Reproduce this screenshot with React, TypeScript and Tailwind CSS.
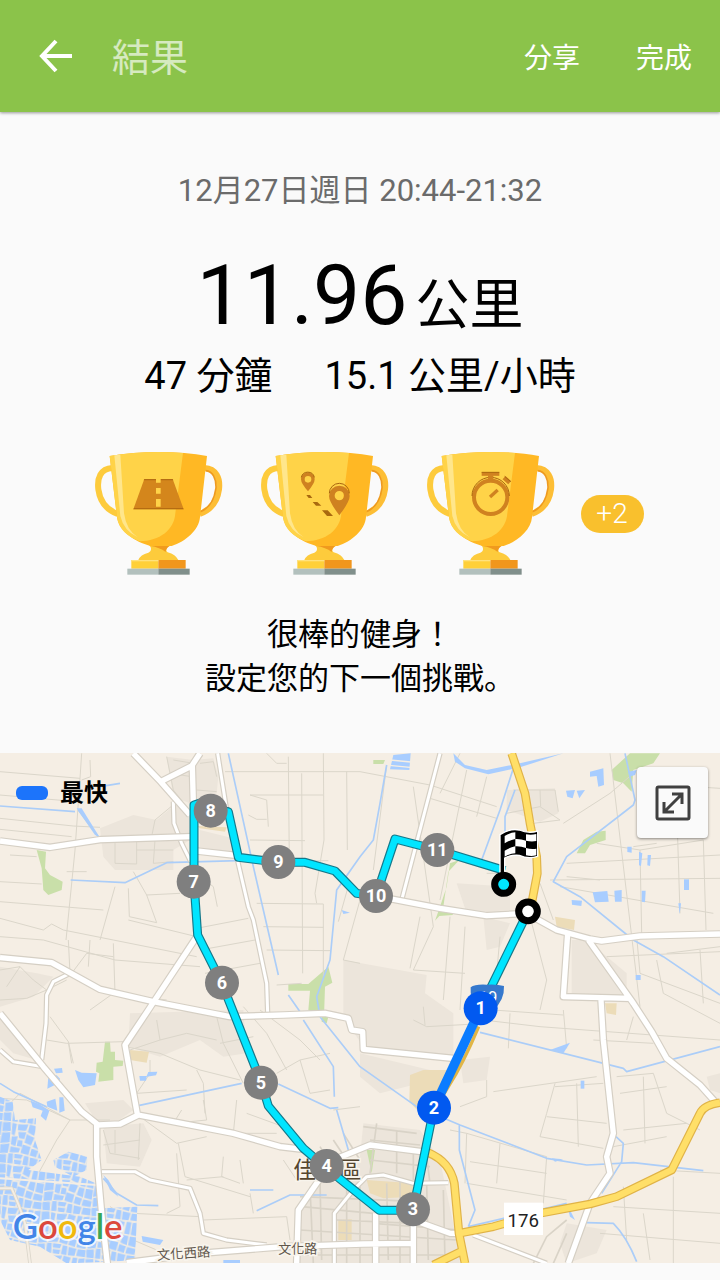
import type { ReactNode } from "react"

const minorRoads = [
  "M0 95 L240 115 L245 40 M240 115 L225 330 L198 600 M270 60 L272 110 L245 120",
  "M0 235 L220 258 L300 262 M0 165 L230 185 M0 268 L215 290 M0 425 L125 432",
  "M30 345 L110 350 M200 395 L260 395 M0 485 L310 510 M0 535 L130 570 L155 552 L190 570 L340 600 L590 650",
  "M0 590 L130 600 L345 660 L600 680 M205 600 L210 700 M270 600 L265 680 M340 610 L345 760 M345 440 L300 600",
  "M385 445 L388 530 L470 548 L440 465 L400 395 M385 540 L590 590 M440 465 L540 460 M590 565 L745 535 M600 630 L765 600 M615 700 L780 670",
  "M600 410 L640 440 L652 500 M345 290 L345 370 L410 372 L410 300 M465 300 L460 370 L520 365 M410 330 L520 330",
  "M455 290 L465 240 L525 190 M500 50 L520 150 L560 200 M520 60 L580 70 M510 100 L575 110 M590 150 L650 155 M600 70 L640 65 L650 110",
  "M675 95 L1080 95 M865 50 L868 370 M905 100 L908 700 M970 40 L972 300 L945 460 L950 490 M750 165 L970 165 M750 165 L800 180 L805 260",
  "M745 225 L770 238 L800 238 M750 300 L915 302 M1040 95 L1042 330 M770 365 L985 362 M770 490 L970 492 L970 720 M790 560 L970 562",
  "M800 630 L990 632 M830 735 L905 730 M1050 420 L1015 545 M1080 480 L1030 660 L1080 670 M800 40 L830 70 L860 70",
  "M1160 75 L1120 390 M1080 95 L1290 135 L1490 200 M1290 175 L1490 235 M1320 160 L1380 40 M1400 90 L1320 480 M1460 110 L1430 230",
  "M1240 140 L1300 560 L1240 690 L1395 700 M1260 530 L1230 685 M1350 530 L1330 780 M1395 560 L1380 810 M1460 400 L1520 400",
  "M1520 220 L1620 200 L1680 240 L1600 250 M1540 150 L1665 150 L1675 215 M1620 150 L1622 200 M1690 250 L1830 160 L1900 100",
  "M1830 40 L1920 800 M1800 420 L1700 410 M1700 370 L2160 345 M1650 420 L2160 415 M1680 440 L2140 520 M1790 310 L1920 330 L2110 300",
  "M2110 300 L2118 570 M2030 200 L2040 520 M1920 330 L1925 580 M1620 430 L1660 540 M1900 320 L1970 310 M2080 140 L2160 145",
  "M2000 640 L2160 620 M1910 590 L1920 700 L2160 790 M2100 630 L2110 790 M1970 660 L1990 760 L2160 850 M1820 650 L2160 635",
  "M1590 530 L1640 720 L1620 810 M1500 590 L1480 810 L1690 825 M1530 820 L1525 925 M1450 840 L1620 860 L2160 900 M1690 810 L1700 925",
  "M1480 1055 L1790 1010 M1665 1030 L1640 1120 L1620 1190 L1810 1225 M1665 1040 L1810 1030 M1730 1030 L1735 1220 M1640 1130 L1820 1150",
  "M1850 1010 L1960 1000 L2000 1120 L2100 1170 M1860 1060 L2000 1040 M1870 1170 L2060 1150 M1930 1010 L1935 1210 M1840 1220 L2000 1190",
  "M1350 1170 L1400 1180 L1640 1250 L1630 1390 M1400 1180 L1395 1330 M1500 1210 L1490 1330 M1400 1330 L1700 1380 M1410 1265 L1640 1300",
  "M1840 1400 L2160 1420 M1870 1340 L1880 1500 M2020 1310 L2020 1570 M1980 1290 L2160 1300 M1800 1480 L2160 1510 M1930 1420 L1950 1560",
  "M1380 1100 L1460 1070 L1460 1020 M1240 840 L1280 860 L1460 850 M1270 800 L1275 855 M1780 900 L1960 910 M1900 830 L1880 900",
  "M0 690 L60 680 L100 720 L140 750 L200 720 M60 680 L20 740 M0 780 L80 775 L140 750 M215 700 L260 640 L340 650 M270 810 L340 760 L500 780",
  "M140 900 L200 910 L370 905 M205 905 L215 970 M220 970 L205 905 L150 830 M375 920 L480 940 L600 990 L720 1020 M590 990 L610 1030 L615 1120",
  "M450 960 L450 1000 L410 1060 L560 1050 M610 1080 L620 1140 L520 1150 L545 1110 M710 1080 L700 1180 L830 1180 M740 1120 L850 1160",
  "M420 1130 L530 1210 L620 1190 M535 1210 L555 1310 L750 1370 M530 1240 L540 1400 L500 1420 M670 1250 L665 1310 L720 1330 M560 1320 L670 1310",
  "M400 1420 L600 1430 M610 1440 L860 1430 L870 1500 M750 1360 L760 1420 M850 1260 L890 1320 M720 1260 L730 1330",
  "M650 830 L670 910 L730 1030 M730 800 L800 880 L860 990 M780 810 L900 900 L960 960 M660 910 L760 890 M830 1000 L900 960 L990 940",
  "M470 840 L480 900 L390 930 M480 900 L560 880 L650 900 M900 960 L930 1060 L990 1050 M1000 1110 L1080 1100",
  "M310 1170 L330 1240 L420 1255 M345 1170 L345 1240 M420 1150 L415 1260 M310 1215 L420 1200 M0 1075 L80 1080 L210 1140 L330 1140",
  "M210 1140 L170 1200 L110 1310 M30 1090 L60 1060 L210 1140 M380 1430 L400 1500 L470 1530 M330 1400 L400 1440",
]

const townRoads = [
  "M900 1370 L1260 1385 M905 1400 L1120 1420 M1120 1450 L1380 1470 M1010 1440 L1240 1450 M900 1470 L1370 1500 M900 1545 L1380 1545",
  "M930 1340 L940 1570 M960 1320 L965 1560 M1040 1300 L1040 1570 M1080 1340 L1080 1570 M1160 1330 L1165 1560 M1200 1320 L1200 1570 M1280 1330 L1285 1560 M1330 1350 L1335 1560",
  "M1090 1160 L1250 1180 M1130 1150 L1110 1300 M1110 1200 L1260 1215 M1110 1260 L1290 1280 M1190 1170 L1190 1300 M1240 1240 L1240 1320 M1280 1250 L1290 1330",
  "M960 1220 L1010 1300 M1000 1200 L1060 1290 M1030 1180 L1080 1260 M1600 1570 L1640 1490 L1700 1440 M1660 1570 L1700 1480",
]

const whiteRoads = [
  "M400 40 L482 125 L570 225",
  "M482 125 L575 78 L600 40",
  "M577 78 L580 190",
  "M0 303 L150 322 L300 299 L575 290",
  "M590 333 L715 347",
  "M590 590 L445 810 L375 915 L412 1123",
  "M0 653 L155 668 L300 748 L460 785 L690 830 L850 825 L975 820 L1045 835 L1055 870 L1088 875 L1090 928 L1360 955",
  "M0 820 L130 980 L245 1115 L295 1155 L360 1152 L415 1125 L700 1180 L840 1220 L910 1228",
  "M290 1155 L290 1250 L305 1420 L322 1570",
  "M380 1568 L600 1540 L850 1520 L1090 1512 L1240 1510",
  "M890 1570 L895 1410 L950 1330 L1000 1260 L1110 1215 L1265 1235",
  "M1128 468 L1320 505 L1460 527 L1580 520 L1670 570 L1770 597 L1805 603 L1920 588 L2160 582",
  "M1703 580 L1690 770 L1890 775",
  "M1765 600 L1900 790 L1955 875 L2000 955 L2100 1035 L2145 1085",
  "M1803 780 L1810 900 L1825 1040 L1840 1180 L1820 1250 L1830 1300 L1770 1390 L1705 1570",
  "M1240 1440 L1350 1480 L1380 1480",
  "M1127 1420 L1127 1570 M1240 1440 L1240 1570",
]

const narrowRoads = [
  "M653 40 L680 210 L710 350 L745 500 L760 540 L800 730 L803 820",
  "M520 185 L522 250 L545 310 L572 365",
  "M210 700 L160 725 L140 765 L138 850 L125 960",
  "M0 930 L40 965 L130 980",
  "M305 1295 L405 1295 L450 1320 L570 1345 L600 1420 L610 1480 L680 1500 L800 1515",
  "M1003 1570 L1003 1420 L1060 1350 L1100 1310 L1150 1305 L1240 1330 L1345 1328",
  "M1320 40 L1205 480",
  "M1420 1485 L1640 1570",
]

const yellowRoads = [
  "M1535 40 L1575 160 L1590 250 L1610 350 L1612 400 L1595 490 L1585 520",
  "M1285 1238 Q1350 1265 1363 1330 L1377 1480 L1395 1570",
  "M1300 1575 L1382 1535",
  "M1377 1480 L1480 1460 L1620 1420 L1770 1392 L1850 1370 L2015 1290 L2100 1120 Q2112 1095 2160 1088",
]

const streams = [
  "M0 198 L225 215 M235 210 L295 290 M212 420 L375 428 L500 368 L715 362 M300 140 L360 130",
  "M685 40 L760 380 L835 705 M865 765 L900 815 M1080 350 L1010 450 L990 660 L950 770 L960 830",
  "M1160 75 L1140 190 L1120 300 L1080 350 M1540 85 L1500 210 L1445 360 M1545 150 L1515 230 L1515 290",
  "M1875 40 L1905 180 L1900 195 L1700 350 L1660 425 L1740 470 L1900 600 L1990 650 L2160 765",
  "M1440 877 L1870 985 L1880 995 L2160 920 M1080 980 L1250 1100 L1380 1155 L1640 1255 L1760 1275 L1900 1268 L2110 1292",
  "M1378 1155 L1378 1230 L1425 1410 L1405 1460 M1405 1460 L1700 1390 M1848 1190 L1870 1210 L1865 1265 L1805 1360",
  "M1760 1448 L1840 1450 Q1880 1490 1910 1565 M415 1097 L725 1030 M835 1032 L990 1105 L1015 1103",
  "M910 840 L1000 980 L1003 1070 M1010 1110 L1045 1230 M960 830 L1080 980 M770 1412 L870 1365 L980 1365 M750 1350 L820 1350",
  "M0 1030 L40 1055 L140 1100 M310 1315 L350 1360 L410 1395 L475 1397",
]

// outlines of the fish pond areas, filled with the ponds pattern
const pondAreas = [
  "0,1070 38,1085 45,1140 108,1135 105,1200 125,1260 85,1290 240,1310 288,1330 298,1405 412,1400 405,1560 330,1565 200,1570 120,1520 30,1500 0,1440",
  "160,1260 205,1235 262,1250 260,1290 220,1310 165,1280",
]

const water = [
  "92,1082 118,1092 148,1112 138,1142 122,1128 128,1112 98,1102",
  "140,1085 166,1076 172,1112 142,1100",
  "178,1072 190,1072 194,1112 178,1118",
  "162,986 186,984 188,998 168,1000",
  "145,1010 170,1006 180,1016 175,1030 142,1046",
  "225,990 245,998 290,1000 285,1035 250,1042 235,1020",
  "418,1008 440,1008 445,996 472,995 468,1006 440,1010 438,1022 420,1022",
  "230,205 245,205 298,290 285,285",
  "310,1305 325,1320 355,1370 330,1350",
  "425,1488 490,1500 480,1515 428,1505",
  "670,1560 720,1560 720,1570 670,1570",
  "1180,45 1232,40 1228,90 1170,88",
  "1360,40 1395,75 1460,90 1550,72 1690,40 1560,82 1465,103 1395,85 1365,65",
  "1770,95 1810,85 1812,135 1795,140 1790,108 1770,110",
  "1698,152 1725,150 1718,175 1702,170",
  "1730,152 1755,150 1738,175",
  "1885,95 1910,90 1905,105 1888,110",
  "1778,457 1822,453 1826,485 1785,487",
  "1843,452 1865,450 1865,485 1845,485",
  "1925,452 1937,452 1935,487 1925,485",
  "2052,418 2067,418 2067,450 2052,450",
  "2035,490 2043,490 2039,522",
  "1715,480 1746,482 1744,498 1716,494",
  "1882,320 1895,320 1895,338 1882,336",
  "1917,335 1927,340 1923,378 1917,376",
  "1943,345 1953,345 1950,378 1942,376",
  "1907,705 1922,705 1922,720 1907,720",
  "1650,930 1710,908 1690,940",
  "1742,1022 1753,1022 1753,1046 1742,1046",
  "1655,1255 1690,1258 1665,1265",
  "1700,1390 1725,1440 1710,1430",
  "1025,510 1050,518 1030,522",
]

const parks = [
  "110,330 138,335 135,385 150,405 188,425 185,450 145,465 130,450 125,385",
  "865,732 925,732 985,680 997,728 975,740 972,830 925,810 930,752 865,752",
  "315,905 330,905 332,935 345,935 345,960 370,962 368,978 340,980 340,1020 295,1025 298,1000 288,995 290,968 308,965",
  "1835,90 1890,40 1980,40 1960,70 1900,90 1895,155 1870,130 1840,120",
  "1730,340 1750,300 1790,275 1817,272 1817,300 1770,315 1755,340",
  "1350,370 1378,360 1345,395 1330,500 1360,515 1358,525 1318,528 1305,542 1320,500 1340,440",
  "1100,1230 1125,1230 1115,1300",
  "1120,60 1155,60 1150,72 1120,72",
  "965,830 985,830 980,850 965,845",
]

const builtUp = [
  "300,265 400,225 470,240 530,190 570,230 570,300 520,330 520,390 345,390 310,350",
  "500,50 580,60 640,55 655,110 650,160 570,190 520,170",
  "600,270 720,300 710,345 600,325",
  "390,820 730,810 740,940 670,950 600,900 480,950 385,920",
  "310,1160 430,1150 455,1200 420,1280 320,1270",
  "255,1090 370,1080 400,1110 350,1145 290,1145",
  "1030,660 1280,705 1275,760 1360,820 1360,950 1090,920 1030,830",
  "1080,940 1290,990 1260,1030 1140,1060 1080,1010",
  "1090,1150 1260,1170 1320,1260 1370,1500 1380,1570 900,1570 900,1400 960,1300 1080,1250",
  "1520,150 1665,145 1675,220 1620,245 1520,210",
  "1370,430 1530,440 1530,510 1400,520",
  "1450,530 1530,550 1500,620 1460,630",
  "1715,600 1760,600 1880,700 1880,770 1715,760",
  "1680,1510 1700,1450 1820,1470 1790,1540 1700,1570",
  "0,680 110,700 160,710 100,770 0,800",
  "1380,960 1470,950 1460,1020 1390,1030",
  "2120,1010 2160,1000 2160,1060 2130,1050",
  "0,830 60,880 110,960 40,940 0,900",
]

const sandPatches = [
  "1230,1005 1270,990 1350,990 1330,1070 1280,1140 1228,1085",
  "1100,1320 1240,1330 1240,1370 1150,1375 1110,1360",
  "390,930 447,935 440,968 390,960",
  "1665,530 1725,540 1722,570 1670,560",
  "1015,1440 1055,1438 1055,1500 1015,1500",
  "1815,790 1850,790 1848,825 1820,820",
  "590,258 680,262 675,275 600,265",
]

const routeStart = "M1584 515 L1442 805"
const routeEnd =
  "M1302 1103 L1239 1411 L1138 1411 L980 1285 L910 1225 L805 1098 L784 1028 L665 728 L593 585 L585 470 L582 425 L582 195 L605 188 L632 205 L685 215 L715 352 L835 367 L915 367 L1005 393 L1070 460 L1128 468 L1185 297 L1312 330 L1515 392"
const fastest = "M1442 805 L1302 1103"

const kilometres = [
  { n: 11, x: 1312, y: 330 },
  { n: 10, x: 1128, y: 468 },
  { n: 9, x: 835, y: 366 },
  { n: 8, x: 632, y: 212 },
  { n: 7, x: 581, y: 425 },
  { n: 6, x: 666, y: 728 },
  { n: 5, x: 783, y: 1028 },
  { n: 4, x: 980, y: 1278 },
  { n: 3, x: 1239, y: 1408 },
  { n: 2, x: 1302, y: 1103, fast: true },
  { n: 1, x: 1442, y: 805, fast: true },
]

function Trophy({ label, children }: { label: string; children: ReactNode }) {
  return (
    <svg viewBox="40 60 390 381" className="w-[130px]" role="img" aria-label={label}>
      {/* handles */}
      <path d="M98 114 C62 116 52 145 56 178 C61 215 82 240 114 252" fill="none" stroke="#fdcb3c" strokeWidth="18" />
      <path d="M374 114 C410 116 422 145 418 178 C413 215 392 240 360 252" fill="none" stroke="#fdbe35" strokeWidth="18" />
      <path d="M378 122 C400 124 410 146 409 174 C404 210 388 235 362 245" fill="none" stroke="#ee9a1f" strokeWidth="5" />
      {/* stem and foot */}
      <path d="M205 343 C218 352 216 364 206 368 Q182 374 176 390 H296 Q288 374 264 367 C256 362 262 351 272 343 Z" fill="#fdcb3c" />
      <path d="M212 348 H270 Q258 355 258 366 Q240 352 212 348 Z" fill="#f09a1e" />
      {/* bowl */}
      <path d="M90 78 Q160 66 236 66 Q320 66 382 78 L361 262 C358 300 318 335 276 348 H212 C166 336 118 304 112 262 Z" fill="#ffb824" />
      <path d="M90 78 Q160 66 236 66 Q275 66 310 69 L287 250 C284 300 240 333 180 334 C146 322 116 298 112 262 Z" fill="#ffd348" />
      <path d="M104 76 L122 74 L133 250 Q140 300 174 322 Q132 302 122 258 Z" fill="#ffe68c" />
      {/* base */}
      <path d="M155 390 H236 V416 H155 Z" fill="#ffd038" />
      <path d="M236 390 H318 V416 H236 Z" fill="#f1961d" />
      <path d="M155 390 H236 V394 H155 Z" fill="#ffe27d" />
      <path d="M143 416 H236 V434 H143 Z" fill="#b2c0bd" />
      <path d="M236 416 H330 V434 H236 Z" fill="#808f8b" />
      {children}
    </svg>
  )
}

function RoadMark() {
  return (
    <>
      <path d="M194 147 H279 L312 238 H161 Z" fill="#d4861c" />
      <path d="M194 147 H279 L281 151 H192 Z M163 234 H310 L312 238 H161 Z" fill="#b56c12" />
      <path d="M229 147 H243 V158 H229 Z M229 174 H243 V191 H229 Z M229 207 H243 V230 H229 Z" fill="#ffd348" />
    </>
  )
}

function PinsMark() {
  return (
    <g transform="translate(-495 0)">
      <path fillRule="evenodd" d="M682 184 Q661 160 661 148 A20 20 0 0 1 702 148 Q702 160 682 184 Z M682 138 A10 10 0 1 0 682 158 A10 10 0 1 0 682 138 Z" fill="#cf8120" />
      <path fillRule="evenodd" d="M776 256 Q745 215 745 198 A30 30 0 0 1 807 198 Q807 215 776 256 Z M776 183 A14 14 0 1 0 776 211 A14 14 0 1 0 776 183 Z" fill="#cf8120" />
      <path d="M662 142 A20 20 0 0 1 701 142 M746 190 A30 30 0 0 1 806 190" fill="none" stroke="#a9650f" strokeWidth="3" />
      <path d="M677 195 H688 L695 204 H684 Z M696 216 H710 L722 227 H706 Z M724 241 H741 L757 258 H739 Z" fill="#a9690f" />
    </g>
  )
}

function StopwatchMark() {
  return (
    <g transform="translate(-31 0)" fill="none" stroke="#d08220">
      <circle cx="268" cy="202" r="50" strokeWidth="12" />
      <path d="M212 198 A56 56 0 0 1 324 198" stroke="#a9650f" strokeWidth="3" />
      <path d="M241 132 H294" strokeWidth="11" />
      <path d="M268 136 V152" strokeWidth="16" />
      <path d="M308 143 L325 158" strokeWidth="13" />
      <path d="M266 201 L289 180" strokeWidth="10" />
      <path d="M241 127 H294 M310 139 L328 155" stroke="#a9650f" strokeWidth="3" />
    </g>
  )
}

function Roads({ paths, casing, fill, width }: { paths: string[]; casing: string; fill: string; width: number }) {
  const d = paths.join(" ")
  return (
    <g fill="none" strokeLinejoin="round">
      <path d={d} stroke={casing} strokeWidth={width + 7} />
      <path d={d} stroke={fill} strokeWidth={width} />
    </g>
  )
}

function RouteMap() {
  return (
    <svg viewBox="0 39 2160 1530" className="block w-full" role="img" aria-label="路線地圖">
      <defs>
        <pattern id="ponds" width="148" height="126" patternUnits="userSpaceOnUse" patternTransform="rotate(7)">
          <rect width="148" height="126" fill="#f2ece2" />
          <path
            d="M1 2 L24 0 L27 26 L2 30 Z M29 1 L43 3 L40 38 L31 36 Z M47 4 L78 1 L72 20 L48 22 Z M82 0 L104 4 L98 32 L78 24 Z M110 2 L124 2 L122 40 L106 38 Z M128 4 L146 1 L146 42 L126 40 Z M2 34 L26 30 L28 60 L0 66 Z M32 42 L50 40 L46 70 L32 66 Z M50 26 L74 25 L70 46 L54 44 Z M76 30 L100 38 L92 62 L72 56 Z M104 43 L120 44 L118 72 L98 66 Z M124 45 L146 46 L145 76 L122 72 Z M1 70 L28 64 L26 92 L2 96 Z M32 72 L62 74 L58 88 L31 90 Z M52 50 L66 50 L66 70 L50 69 Z M68 62 L92 67 L88 92 L64 88 Z M96 71 L116 76 L112 96 L92 92 Z M120 77 L146 80 L144 98 L117 97 Z M0 100 L22 97 L24 123 L2 124 Z M28 94 L42 92 L44 122 L28 123 Z M46 93 L72 93 L68 106 L47 106 Z M47 110 L70 110 L68 123 L49 123 Z M76 95 L90 97 L90 124 L73 122 Z M94 98 L118 101 L114 123 L94 124 Z M122 102 L146 102 L146 123 L119 122 Z"
            fill="#a8cdff"
          />
        </pattern>
      </defs>
      <rect y="39" width="2160" height="1530" fill="#f5eee4" />

      <g fill="#ece5db">
        {builtUp.map((p) => <polygon key={p} points={p} />)}
      </g>
      <g fill="#ecdcb8">
        {sandPatches.map((p) => <polygon key={p} points={p} />)}
      </g>
      <g fill="#c9dfa9">
        {parks.map((p) => <polygon key={p} points={p} />)}
      </g>
      <path d={minorRoads.join(" ")} fill="none" stroke="#dbd6ca" strokeWidth="3" strokeLinejoin="round" />
      <path d={townRoads.join(" ")} fill="none" stroke="#d9d3c7" strokeWidth="5" />
      <g fill="url(#ponds)">
        {pondAreas.map((p) => <polygon key={p} points={p} />)}
      </g>
      <path d="M0 1345 L35 1345 Q60 1400 75 1450 L90 1570" fill="none" stroke="#dbd6ca" strokeWidth="11" />
      <path d="M0 1345 L35 1345 Q60 1400 75 1450 L90 1570 M0 1315 L290 1335" fill="none" stroke="#f5eee4" strokeWidth="6" />
      <g fill="#a8cdff">
        {water.map((p) => <polygon key={p} points={p} />)}
      </g>
      <path d={streams.join(" ")} fill="none" stroke="#abcdf8" strokeWidth="5" strokeLinejoin="round" />
      <path d="M1170 60 L1232 66 M1168 76 L1230 82" stroke="#f5eee4" strokeWidth="4" />

      <Roads paths={narrowRoads} casing="#d5cfc4" fill="#ffffff" width={9} />
      <Roads paths={whiteRoads} casing="#d5cfc4" fill="#ffffff" width={16} />
      <path d="M1436 860 Q1390 970 1345 1040 L1290 1130 L1268 1235" fill="none" stroke="#e0b545" strokeWidth="10" />
      <Roads paths={yellowRoads} casing="#e0b347" fill="#ffdf68" width={19} />

      <g fontFamily="'Noto Sans CJK TC', sans-serif" fill="#5f564b" stroke="#f8f4ec" strokeWidth="10" paintOrder="stroke">
        <text x="880" y="1313" fontSize="68" fill="#54452f">佳里區</text>
        <text x="835" y="1538" fontSize="39">文化路</text>
        <text x="472" y="1560" fontSize="40" transform="rotate(-4 472 1560)">文化西路</text>
      </g>

      {/* highway shields */}
      <rect x="1512" y="1388" width="117" height="97" fill="#ffffff" />
      <text x="1570" y="1461" fontSize="56" textAnchor="middle" fontFamily="Roboto, sans-serif" fill="#222222">176</text>

      {/* recorded route */}
      <Roads paths={[routeStart, routeEnd]} casing="#14788a" fill="#00e5ff" width={20} />
      <path d={fastest} stroke="#0a7cff" strokeWidth="28" />
      <path d="M1412 742 Q1425 732 1460 734 Q1490 732 1512 738 Q1514 780 1480 810 H1440 Q1408 780 1412 742 Z" fill="#3578cd" />
      <text x="1464" y="788" fontSize="50" textAnchor="middle" fontFamily="Roboto, sans-serif" fill="#ffffff">19</text>

      <g fontFamily="Roboto, sans-serif" fontWeight="700" fontSize="54" textAnchor="middle">
        {kilometres.map((km) => (
          <g key={km.n}>
            <circle cx={km.x} cy={km.y} r="51" fill={km.fast ? "#0159f0" : "#7f7f7f"} />
            <text x={km.x} y={km.y + 18} fill="#ffffff">{km.n}</text>
          </g>
        ))}
      </g>

      {/* finish flag */}
      <g transform="translate(1080 0)">
        <path d="M420 284 Q450 264 478 270 Q506 282 533 273 V349 Q505 358 478 346 Q452 344 434 354 L434 400 H420 Z" fill="#000000" stroke="#ffffff" strokeWidth="4" />
        <path d="M434 288 Q450 278 466 277 V297 Q450 300 434 310 Z M498 283 Q514 286 529 282 V303 Q514 306 498 302 Z M466 297 Q482 296 498 302 V324 Q482 318 466 319 Z M434 332 Q450 322 466 319 V340 Q450 341 434 350 Z M498 324 Q514 329 529 326 V346 Q514 350 498 346 Z" fill="#ffffff" />
      </g>
      <circle cx="1511" cy="433" r="27" fill="#00e5ff" stroke="#000000" strokeWidth="21" />
      <circle cx="1584" cy="514" r="28" fill="#ffffff" stroke="#000000" strokeWidth="21" />

      <text x="38" y="1498" fontSize="104" fontWeight="600" fontFamily="Lato, sans-serif" stroke="#ffffff" strokeWidth="12" strokeOpacity="0.8" paintOrder="stroke">
        <tspan fill="#4285e8">G</tspan>
        <tspan fill="#dc483c">o</tspan>
        <tspan fill="#f0b90d">o</tspan>
        <tspan fill="#4285e8">g</tspan>
        <tspan fill="#3aa757">l</tspan>
        <tspan fill="#dc483c">e</tspan>
      </text>
    </svg>
  )
}

export default function App() {
  return (
    <div className="min-h-screen bg-[#fafafa] font-[Roboto,'Noto_Sans_CJK_JP',sans-serif] text-black">
      <header className="relative flex h-28 items-center bg-[#8bc34a] pr-7 pl-9 text-white shadow-[0_1px_3px_rgba(0,0,0,0.4)]">
        <button type="button" aria-label="返回" className="flex size-10 items-center justify-center">
          <svg viewBox="0 0 40 40" className="size-10" fill="none" stroke="currentColor" strokeWidth="4">
            <path d="M36 20 H7 M20 5 L6 20 L20 35" />
          </svg>
        </button>
        <h1 className="ml-9 flex-1 pt-1 text-[38px] text-white/65">結果</h1>
        <nav className="flex gap-14 pt-1.5 text-[28px]">
          <button type="button">分享</button>
          <button type="button">完成</button>
        </nav>
      </header>

      <main>
        <section className="flex flex-col items-center pt-14 pb-13">
          <p className="text-[31px] leading-[46px] text-[#6b6b6b]">12月27日週日 20:44-21:32</p>
          <p className="mt-8 flex items-baseline gap-2 leading-[100px]">
            <span className="text-[84px]">11.96</span>
            <span className="text-[54px] leading-none">公里</span>
          </p>
          <div className="flex gap-[52px] text-[38px] leading-[60px]">
            <p>47 分鐘</p>
            <p>15.1 公里/小時</p>
          </div>

          <div className="mt-11 flex items-center pl-4">
            <div className="flex gap-9">
              <Trophy label="最長距離"><RoadMark /></Trophy>
              <Trophy label="路線"><PinsMark /></Trophy>
              <Trophy label="最長時間"><StopwatchMark /></Trophy>
            </div>
            <button type="button" className="ml-[26px] h-[38px] w-[63px] rounded-full bg-[#f9c02d] text-[28px] leading-[38px] font-light text-white">
              +2
            </button>
          </div>

          <p className="mt-9 text-center text-[31px] leading-[44px]">
            很棒的健身！
            <br />
            設定您的下一個挑戰。
          </p>
        </section>

        <section className="relative">
          <RouteMap />
          <div className="absolute top-6 left-4 flex items-center gap-3">
            <span className="h-3.5 w-8 rounded-md bg-[#1c74fb]" />
            <span className="text-2xl font-bold">最快</span>
          </div>
          <button
            type="button"
            aria-label="全螢幕"
            className="absolute top-3.5 right-3 flex size-[71px] items-center justify-center rounded-sm bg-[#fafafa] shadow-[0_1px_3px_rgba(0,0,0,0.45)]"
          >
            <svg viewBox="0 0 36 36" className="size-9" fill="none" stroke="#404040" strokeWidth="3">
              <rect x="2" y="2" width="32" height="32" rx="1.5" />
              <path d="M10 26 L26 10 M17 9 H27 V19 M9 17 V27 H19" />
            </svg>
          </button>
        </section>
      </main>
    </div>
  )
}
